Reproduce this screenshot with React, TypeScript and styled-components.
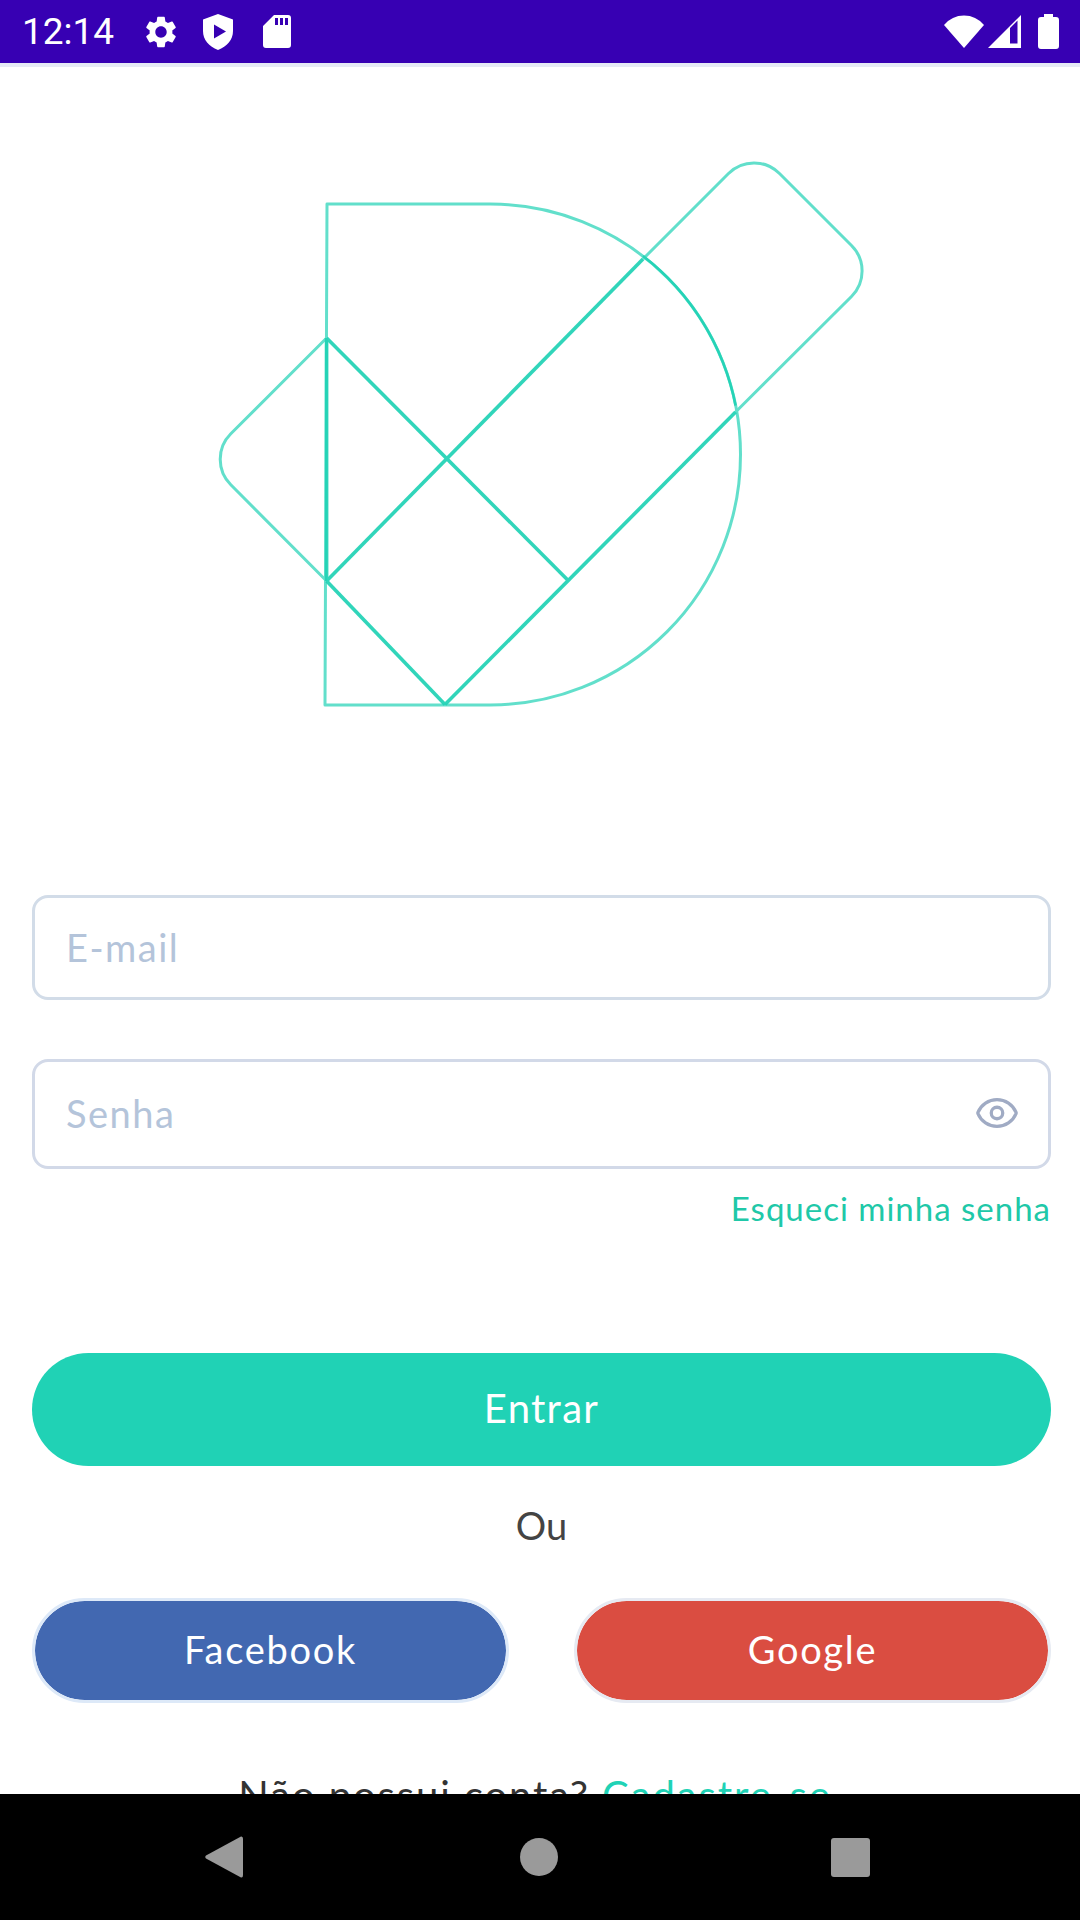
import React from 'react';
import styled, { createGlobalStyle } from 'styled-components';
import { Eye } from 'lucide-react';
import { MdSettings } from 'react-icons/md';

const GlobalStyle = createGlobalStyle`
  html, body {
    margin: 0;
    padding: 0;
    background: #fff;
  }
  * {
    box-sizing: border-box;
  }
`;

const Screen = styled.div`
  width: 1080px;
  height: 1920px;
  display: flex;
  flex-direction: column;
  overflow: hidden;
  background: #fff;
  font-family: Lato, 'Open Sans', sans-serif;
`;

const StatusBar = styled.div`
  flex: none;
  height: 67px;
  padding: 0 21px 0 22px;
  display: flex;
  align-items: center;
  background: #3700b3;
  border-bottom: 4px solid #e6eaf6;
  color: #fff;
`;

const Time = styled.span`
  font-family: Roboto, sans-serif;
  font-size: 37px;
  line-height: 63px;
  width: 97px;
`;

const StatusLeft = styled.div`
  display: flex;
  align-items: center;
  gap: 23px;
  flex: 1;
`;

const StatusRight = styled.div`
  display: flex;
  align-items: center;
  gap: 4px;
`;

const SdSlot = styled.span`
  display: flex;
  margin-left: 7px;
`;

const BatterySlot = styled.span`
  display: flex;
  margin-left: 13px;
`;

const Content = styled.main`
  flex: 1;
  min-height: 0;
  overflow: hidden;
  padding: 0 29px 0 32px;
`;

const LogoWrap = styled.div`
  margin: 83px 0 175px 168px;
  height: 570px;
  svg {
    display: block;
    filter: blur(0.5px);
  }
`;

const Field = styled.div<{ $height: number }>`
  height: ${(p) => p.$height}px;
  display: flex;
  align-items: center;
  justify-content: space-between;
  padding: 0 30px 2px 31px;
  border: 3px solid #d2dce8;
  border-radius: 16px;
`;

const Placeholder = styled.span`
  font-size: 38px;
  color: #b4c4da;
  letter-spacing: 1.5px;
`;

const PasswordField = styled(Field)`
  margin-top: 59px;
  border-color: #d2d9e8;
`;

const EyeButton = styled.span`
  display: flex;
  color: #a0abc4;
  margin-right: -2px;
`;

const ForgotLink = styled.a`
  display: block;
  margin-top: 16px;
  text-align: right;
  font-size: 33px;
  line-height: 46px;
  letter-spacing: 1px;
  color: #20c8a8;
`;

const SubmitButton = styled.button`
  display: block;
  width: 100%;
  height: 113px;
  margin-top: 122px;
  padding: 0 0 4px;
  border: 0;
  border-radius: 57px;
  background: #20d2b5;
  color: #fff;
  font-family: inherit;
  font-size: 40px;
  letter-spacing: 1.3px;
`;

const OrLabel = styled.div`
  margin-top: 35px;
  text-align: center;
  font-size: 38px;
  line-height: 48px;
  color: #444;
`;

const SocialRow = styled.div`
  display: flex;
  justify-content: space-between;
  margin-top: 49px;
`;

const SocialButton = styled.button<{ $bg: string; $edge: string }>`
  width: 477px;
  height: 105px;
  padding: 0 0 4px;
  border: 3px solid ${(p) => p.$edge};
  border-radius: 53px;
  background: ${(p) => p.$bg};
  background-clip: padding-box;
  color: #fff;
  font-family: inherit;
  font-size: 38px;
  letter-spacing: 1.7px;
`;

const SignUpLine = styled.p`
  margin: 68px 0 0;
  padding-right: 13px;
  text-align: center;
  font-size: 40px;
  line-height: 48px;
  letter-spacing: 1.9px;
  color: #333;
  white-space: nowrap;
`;

const SignUpLink = styled.a`
  color: #20d2b5;
`;

const NavBar = styled.nav`
  flex: none;
  height: 126px;
  padding-right: 5px;
  display: flex;
  align-items: center;
  justify-content: center;
  gap: 277px;
  background: #000;
`;

const NavCircle = styled.span`
  width: 38px;
  height: 38px;
  border-radius: 50%;
  background: #9a9a9a;
`;

const NavSquare = styled.span`
  width: 39px;
  height: 39px;
  margin-left: -4px;
  border-radius: 3px;
  background: #9a9a9a;
`;

const ShieldIcon = () => (
  <svg width="30" height="36" viewBox="0 0 30 36" fill="#fff">
    <path
      fillRule="evenodd"
      d="M15 0 L30 5.5 V17 C30 26 24 32.5 15 36 C6 32.5 0 26 0 17 V5.5 Z M11 10.5 V24.5 L23 17.5 Z"
    />
  </svg>
);

const SdIcon = () => (
  <svg width="28" height="33" viewBox="0 0 28 33" fill="#fff">
    <path
      fillRule="evenodd"
      d="M11 0 H25 A3 3 0 0 1 28 3 V30 A3 3 0 0 1 25 33 H3 A3 3 0 0 1 0 30 V11 Z M12 3 V10 H15 V3 Z M17 3 V10 H20 V3 Z M22 3 V10 H25 V3 Z"
    />
  </svg>
);

const WifiIcon = () => (
  <svg width="40" height="34" viewBox="0 0 40 34" fill="#fff">
    <path d="M20 33 L0 10 Q8 0.5 20 0.5 Q32 0.5 40 10 Z" />
  </svg>
);

const SignalIcon = () => (
  <svg width="33" height="33" viewBox="0 0 33 33" fill="#fff">
    <path fillRule="evenodd" d="M33 0 V33 H0 Z M22 13 V28.5 H29.5 V5.5 Z" />
  </svg>
);

const BatteryIcon = () => (
  <svg width="21" height="35" viewBox="0 0 21 35" fill="#fff">
    <path d="M6 0 H15 V3 H18 A3 3 0 0 1 21 6 V32 A3 3 0 0 1 18 35 H3 A3 3 0 0 1 0 32 V6 A3 3 0 0 1 3 3 H6 Z" />
  </svg>
);

const BackTriangle = () => (
  <svg width="38" height="42" viewBox="0 0 38 42" fill="#9a9a9a">
    <path d="M36 0.5 Q38 0 38 3 V39 Q38 42 36 41.5 L1 22.5 Q-0.5 21 1 19.5 Z" />
  </svg>
);

// The logo is drawn in page coordinates, so the viewBox is the crop of the page it sits in.
const Logo = () => (
  <svg width="680" height="570" viewBox="200 150 680 570" fill="none" stroke="#20d2b5" strokeLinejoin="round">
    <g strokeWidth="3" opacity="0.7">
      <path d="M327 204 H490 A250.5 250.5 0 0 1 490 705 H325 Z" />
      <path d="M643 259 L728.5 173.5 A36 36 0 0 1 779.5 173.5 L851.5 245.5 A36 36 0 0 1 851.5 296.5 L735.6 412" />
      <path d="M326.6 338 L230.8 433.8 A36 36 0 0 0 230.8 484.8 L326.6 581" />
    </g>
    <g strokeWidth="3.6" opacity="0.92">
      <path d="M326.6 338 V581" />
      <path d="M326.6 581 L643 259" />
      <path d="M445 704.5 L735.6 412" />
      <path d="M326.6 338 L567.7 580" />
      <path d="M326.6 581 L445 704.5" />
      <path d="M643 256 A250.5 250.5 0 0 1 735.6 405.5" strokeWidth="2.6" />
    </g>
  </svg>
);

const App: React.FC = () => {
  return (
    <Screen>
      <GlobalStyle />
      <StatusBar>
        <StatusLeft>
          <Time>12:14</Time>
          <MdSettings size={38} />
          <ShieldIcon />
          <SdSlot>
            <SdIcon />
          </SdSlot>
        </StatusLeft>
        <StatusRight>
          <WifiIcon />
          <SignalIcon />
          <BatterySlot>
            <BatteryIcon />
          </BatterySlot>
        </StatusRight>
      </StatusBar>

      <Content>
        <LogoWrap>
          <Logo />
        </LogoWrap>

        <Field $height={105}>
          <Placeholder>E-mail</Placeholder>
        </Field>
        <PasswordField $height={110}>
          <Placeholder>Senha</Placeholder>
          <EyeButton>
            <Eye size={46} strokeWidth={1.7} />
          </EyeButton>
        </PasswordField>
        <ForgotLink>Esqueci minha senha</ForgotLink>

        <SubmitButton>Entrar</SubmitButton>
        <OrLabel>Ou</OrLabel>

        <SocialRow>
          <SocialButton $bg="#4268b1" $edge="#dde9f8">Facebook</SocialButton>
          <SocialButton $bg="#da4d41" $edge="#e6eaf2">Google</SocialButton>
        </SocialRow>

        <SignUpLine>
          Não possui conta? <SignUpLink>Cadastre-se</SignUpLink>
        </SignUpLine>
      </Content>

      <NavBar>
        <BackTriangle />
        <NavCircle />
        <NavSquare />
      </NavBar>
    </Screen>
  );
};

export default App;
